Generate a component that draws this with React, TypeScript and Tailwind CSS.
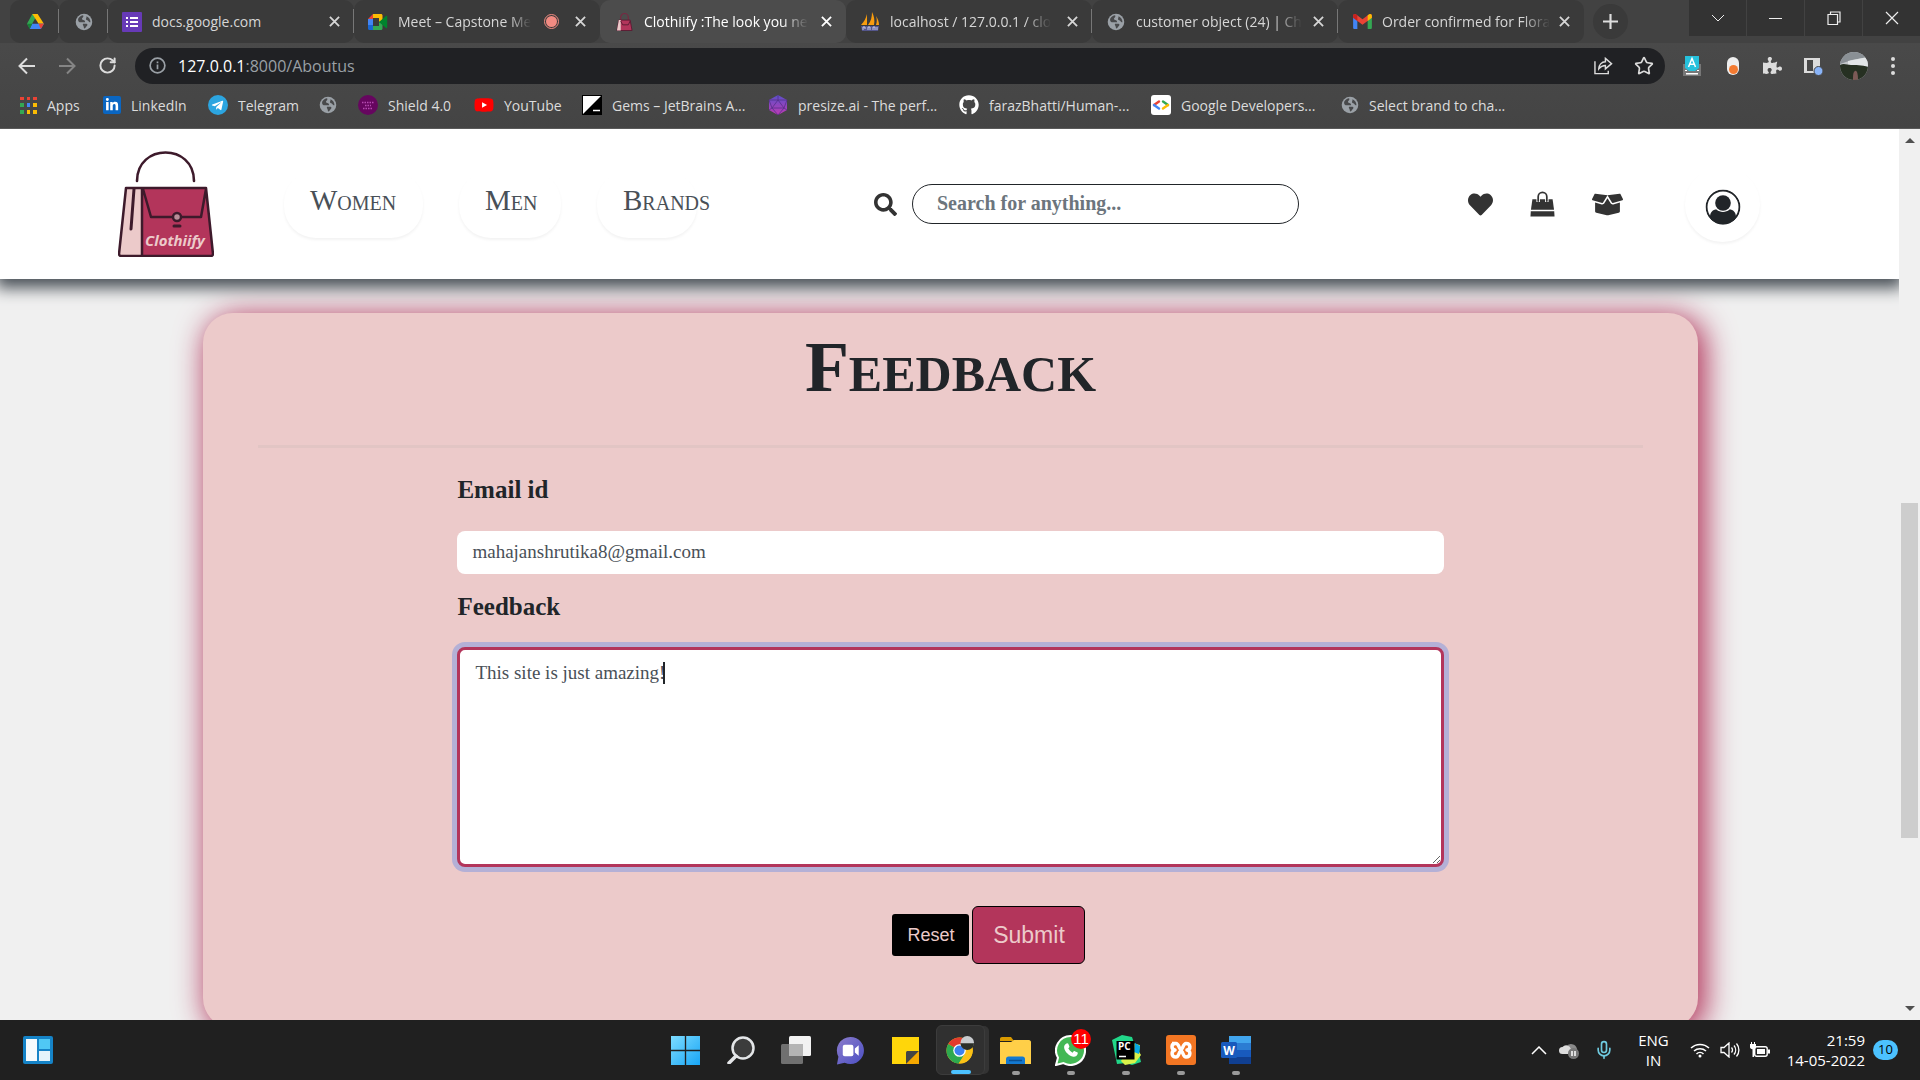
import React from "react";
import { FaHeart, FaBoxOpen, FaGithub, FaLinkedinIn, FaTelegramPlane, FaPuzzlePiece, FaYoutube, FaSearch } from "react-icons/fa";
import { LuMic, LuStar, LuRotateCw } from "react-icons/lu";

const ui = "font-['Open_Sans',sans-serif]";
const serif = "font-['Liberation_Serif',serif]";

/* ---------- browser icons ---------- */

const Globe = () => (
  <svg viewBox="0 0 20 20" className="size-[18px] shrink-0">
    <circle cx="10" cy="10" r="9.2" fill="#9aa0a6" />
    <path d="M3.5 6.5C5 4 7 2.6 9 2.6c.6 1.3.2 2.2-.8 2.9-1 .6-.3 1.9.9 2.2 1.6.4 2.2 1.2 2.1 2.5H5.2c-1.4 0-2-1.8-1.7-3.7zM12.8 3.6c2.6 1.2 4.4 3.6 4.4 6.6-1 .2-1.7-.4-2.4-1.4-.6-.9-1.9-.5-2.5-1.5-.5-1 .6-1.6.5-3.7zM9 12h3.6c1.4 0 1.6 1.6.6 2.5-1 .8-1.2 2.1-2.7 2.8-.9-.4-.5-1.6-1-2.6-.4-.9-1.3-1.7-.5-2.7z" fill="#48494b" />
  </svg>
);

const Drive = () => (
  <svg viewBox="0 0 20 18" className="h-4 w-[18px] shrink-0">
    <path d="M7 0h6l-3.2 5.6L4 16 1 11z" fill="#34a853" />
    <path d="M7 0h6l7 11h-6z" fill="#fbbc04" />
    <path d="M6.6 11H20l-3.4 6H4z" fill="#4285f4" />
    <path d="M1 11h6L4 17z" fill="#188038" />
    <path d="M14 11h6l-3.4 6z" fill="#ea4335" />
  </svg>
);

const Forms = () => (
  <svg viewBox="0 0 20 20" className="size-5 shrink-0">
    <rect width="20" height="20" rx="1" fill="#673ab7" />
    <path d="M4 5h2v2H4zm4 0h8v2H8zM4 9h2v2H4zm4 0h8v2H8zm-4 4h2v2H4zm4 0h8v2H8z" fill="#fff" />
  </svg>
);

const Meet = () => (
  <svg viewBox="0 0 20 16" className="h-4 w-5 shrink-0">
    <path d="M5 0h8c.8 0 1.500.6 1.500 1.500V6L11 8V4H5z" fill="#fbbc04" />
    <path d="M5 0v5H0z" fill="#ea4335" />
    <path d="M0 5h5v6H0z" fill="#4285f4" />
    <path d="M0 11h5v5H1.500C.6 16 0 15.400 0 14.500z" fill="#1967d2" />
    <path d="M5 12h6V8l3.500 2v4.500c0 .9-.7 1.500-1.500 1.500H5z" fill="#34a853" />
    <path d="M11 8l7-6c.5-.4 1.200 0 1.200.6v10.800c0 .6-.7 1-1.200.6z" fill="#00832d" />
  </svg>
);

const Bag = () => (
  <svg viewBox="0 0 18 20" className="h-5 w-[17px] shrink-0">
    <path d="M5 8V5a4 4 0 0 1 8 0v3" fill="none" stroke="#7a2742" strokeWidth="1.200" />
    <path d="M3 8h12l2 11H1z" fill="#b3355b" stroke="#5b1c33" />
    <path d="M3 8h2v11H1z" fill="#eccaca" />
    <path d="M5 9l2 4h6l2-4" fill="none" stroke="#5b1c33" />
  </svg>
);

const PhpMyAdmin = () => (
  <svg viewBox="0 0 20 20" className="size-5 shrink-0">
    <path d="M7 2v11H1C4 10 6 6 7 2zM12 0c2 4 3 8 2 13H8c3-4 4-8 4-13zM16 4c2 3 3 6 3 9h-3c1-3 1-6 0-9z" fill="#f89c0e" />
    <path d="M1 14h18l-1 5H2z" fill="#54568c" />
    <path d="M3 18v-3h2v2M8 18v-3h2v3M13 18v-3h2v3M17 15v3" stroke="#c9cbe8" fill="none" />
  </svg>
);

const Gmail = () => (
  <svg viewBox="0 0 20 16" className="h-[15px] w-[19px] shrink-0">
    <path d="M0 3h4.500v13H1.400C.6 16 0 15.400 0 14.600z" fill="#4285f4" />
    <path d="M15.500 3H20v11.600c0 .8-.6 1.400-1.400 1.400h-3.100z" fill="#34a853" />
    <path d="M0 2c0-2 2-2.500 3.200-1.600L10 5.500 16.800.4C18 -.5 20 0 20 2v2l-10 7.500L0 4z" fill="#ea4335" />
    <path d="M15.500 1.400 16.800.4C18-.5 20 0 20 2v2l-4.500 3.400z" fill="#fbbc04" />
    <path d="M0 2C0 0 2-.5 3.200.4l1.300 1v6L0 4z" fill="#c5221f" />
  </svg>
);

const AppsGrid = () => {
  const colors = ["#ea4335", "#ea4335", "#ea4335", "#34a853", "#4285f4", "#fbbc04", "#34a853", "#fbbc04", "#fbbc04"];
  return (
    <span className="grid size-[17px] shrink-0 grid-cols-3 gap-[3px]">
      {colors.map((c, i) => (
        <span key={i} style={{ backgroundColor: c }} />
      ))}
    </span>
  );
};

const Close = () => (
  <svg viewBox="0 0 12 12" className="size-[11px]" stroke="currentColor" strokeWidth="2">
    <path d="M1 1l10 10M11 1L1 11" />
  </svg>
);

/* ---------- browser chrome ---------- */

function Tab({ icon, title, active, recording, divider, fade }: { icon: React.ReactNode; title: string; active?: boolean; recording?: boolean; divider?: boolean; fade?: boolean }) {
  return (
    <div className={`relative flex h-[43px] w-[246px] min-w-0 items-center rounded-[10px] px-[14px] text-[14px] ${active ? "bg-[#4c4c4c] text-white" : "bg-[#3a3a3a] text-[#d6d6d6]"}`}>
      <span className="mr-[10px] flex w-5 shrink-0 justify-center">{icon}</span>
      <span className="min-w-0 flex-1 whitespace-nowrap">
        <span className={fade ? "[mask-image:linear-gradient(to_right,black_84%,transparent)]" : ""}>{title}</span>
      </span>
      {recording && <span className="mr-4 size-[15px] shrink-0 rounded-full border border-[#f28b82] p-px"><span className="block size-full rounded-full bg-[#f28b82]" /></span>}
      <button aria-label={`Close ${title}`} className="shrink-0"><Close /></button>
      {divider && <span className="absolute top-[9px] right-0 h-6 w-px bg-[#777]" />}
    </div>
  );
}

function PinnedTab({ icon, label }: { icon: React.ReactNode; label: string }) {
  return (
    <button aria-label={label} className="relative flex h-[43px] w-[49px] shrink-0 items-center justify-center rounded-[10px] bg-[#3a3a3a]">
      {icon}
      <span className="absolute top-[9px] right-0 h-6 w-px bg-[#777]" />
    </button>
  );
}

function TabStrip() {
  return (
    <div className="flex h-[43px] items-start bg-[#424242]">
      <div className="flex min-w-0 pl-[10px]">
        <PinnedTab label="Google Drive" icon={<Drive />} />
        <PinnedTab label="Pinned page" icon={<Globe />} />
        <Tab icon={<Forms />} title="docs.google.com" divider />
        <Tab icon={<Meet />} title="Meet – Capstone Me" recording fade />
        <Tab icon={<Bag />} title="Clothiify :The look you ne" active fade />
        <Tab icon={<PhpMyAdmin />} title="localhost / 127.0.0.1 / clo" divider fade />
        <Tab icon={<Globe />} title="customer object (24) | Ch" divider fade />
        <Tab icon={<Gmail />} title="Order confirmed for Flora" fade />
      </div>
      <button aria-label="New tab" className="mt-1 ml-[9px] flex size-[35px] shrink-0 items-center justify-center rounded-full bg-[#3a3a3a] text-[#dedede]">
        <svg viewBox="0 0 14 14" className="size-[15px]" stroke="currentColor" strokeWidth="2"><path d="M7 0v14M0 7h14" /></svg>
      </button>
      <div className="ml-auto flex h-9 shrink-0 gap-px text-[#eee]">
        <button aria-label="Search tabs" className="flex w-[57px] items-center justify-center bg-[#333]"><svg viewBox="0 0 14 8" className="h-2 w-3.5" fill="none" stroke="currentColor"><path d="M1 1l6 6 6-6" /></svg></button>
        <button aria-label="Minimize" className="flex w-[57px] items-center justify-center bg-[#333]"><span className="h-px w-[13px] bg-current" /></button>
        <button aria-label="Restore" className="flex w-[57px] items-center justify-center bg-[#333]"><svg viewBox="0 0 14 14" className="size-[14px]" fill="none" stroke="currentColor" strokeWidth="1.200"><path d="M1 3.500h9.500v10H1zM3.500 3.500V1H13v10h-2.500" /></svg></button>
        <button aria-label="Close window" className="flex w-[57px] items-center justify-center bg-[#333]"><svg viewBox="0 0 14 14" className="size-[14px]" stroke="currentColor" strokeWidth="1.200"><path d="M1 1l12 12M13 1L1 13" /></svg></button>
      </div>
    </div>
  );
}

function Toolbar() {
  return (
    <div className="flex h-[45px] items-center pr-[25px] pl-[18px] text-[#dcdcdc]">
      <button aria-label="Back"><svg viewBox="0 0 18 18" className="size-[18px]" fill="none" stroke="currentColor" strokeWidth="2"><path d="M17 9H2M9 1.500L1.500 9 9 16.500" /></svg></button>
      <button aria-label="Forward" className="ml-[22px] text-[#858585]"><svg viewBox="0 0 18 18" className="size-[18px]" fill="none" stroke="currentColor" strokeWidth="2"><path d="M1 9h15M9 1.500L16.500 9 9 16.500" /></svg></button>
      <button aria-label="Reload" className="ml-[22px]"><LuRotateCw className="size-[19px]" strokeWidth={2.500} /></button>
      <div className="ml-[18px] flex h-9 flex-1 items-center rounded-full bg-[#202124] pr-[11px] pl-[14px]">
        <svg viewBox="0 0 18 18" className="size-[17px]" fill="none" stroke="#9aa0a6" strokeWidth="1.800"><circle cx="9" cy="9" r="7.800" /><path d="M9 8v5M9 4.800v1.800" /></svg>
        <div className="ml-3 flex-1 text-[16px] text-[#9aa0a6]"><span className="text-white">127.0.0.1</span>:8000/Aboutus</div>
        <button aria-label="Share" className="mr-[21px]"><svg viewBox="0 0 20 18" className="h-[18px] w-[19px]" fill="none" stroke="currentColor" strokeWidth="1.500"><path d="M1 4v13h14v-3M12 1l6.500 5.500L12 12V8.500C9 8.500 7 9.500 5 12c0-4 3-7.500 7-7.500z" /></svg></button>
        <button aria-label="Bookmark this tab"><LuStar className="size-5" /></button>
      </div>
      <button aria-label="Keyboard extension" className="ml-[18px]">
        <svg viewBox="0 0 18 20" className="h-5 w-[18px]"><path d="M0 8h18v12H0z" fill="#777" /><path d="M3 17h12v1.500H3zM2 14h2v1H2zm12 0h2v1h-2z" fill="#fff" /><path d="M2 0h14v12l-4 3H6l-4-3z" fill="#26c1dc" /><path d="M5.500 11L9 2.500 12.500 11M6.800 8.300h4.400" stroke="#fff" fill="none" strokeWidth="1.500" /></svg>
      </button>
      <button aria-label="Recorder extension" className="ml-[26px] flex h-[18px] w-3 items-end justify-center rounded-full bg-[#eee] p-px"><span className="size-[9px] rounded-full bg-[#f37a31]" /></button>
      <button aria-label="Extensions" className="ml-6"><FaPuzzlePiece className="size-[19px]" /></button>
      <button aria-label="Side panel" className="ml-[21px]">
        <svg viewBox="0 0 20 20" className="size-5"><path d="M1 2h16v15H1zm3 2v11h6V4z" fill="#dcdcdc" fillRule="evenodd" /><circle cx="15.500" cy="15" r="4.500" fill="#8ab4f8" stroke="#464646" /></svg>
      </button>
      <button aria-label="Profile" className="ml-[17px]">
        <svg viewBox="0 0 28 28" className="size-7"><clipPath id="avatar"><circle cx="14" cy="14" r="14" /></clipPath><g clipPath="url(#avatar)"><path d="M0 0h28v28H0z" fill="#c3c7ca" /><path d="M0 0h28v5L12 8 0 12z" fill="#8a9095" /><path d="M8 9l20-4v9H8z" fill="#e2e5e7" /><path d="M0 13c4-2 7 0 11 0s11 0 17 2v13H0z" fill="#263022" /><path d="M13 28c0-5 0-8 2-9s3 3 3 9z" fill="#7c5a56" /></g></svg>
      </button>
      <button aria-label="Menu" className="ml-[23px] flex flex-col gap-[3px]">
        <span className="size-1 rounded-full bg-current" /><span className="size-1 rounded-full bg-current" /><span className="size-1 rounded-full bg-current" />
      </button>
    </div>
  );
}

function Bookmark({ icon, label, width }: { icon: React.ReactNode; label: string; width: string }) {
  return (
    <a href="#bookmark" aria-label={label || "Bookmark"} className="flex shrink-0 items-center gap-[10px] whitespace-nowrap">
      {icon}
      {label && <span className={width}>{label}</span>}
    </a>
  );
}

function BookmarksBar() {
  return (
    <nav aria-label="Bookmarks" className="flex h-[41px] items-center gap-[21px] border-b border-[#5a5a5a] pb-1.5 pl-5 text-[14px] text-[#dcdcdc]">
      <Bookmark icon={<AppsGrid />} label="Apps" width="w-[35px]" />
      <Bookmark icon={<span className="flex size-[18px] items-center justify-center rounded-[2px] bg-[#0a66c2] text-white"><FaLinkedinIn className="size-[14px]" /></span>} label="LinkedIn" width="w-[56px]" />
      <Bookmark icon={<span className="flex size-5 items-center justify-center rounded-full bg-[#2ca5e0] text-white"><FaTelegramPlane className="mr-0.5 size-[13px]" /></span>} label="Telegram" width="w-[60px]" />
      <Bookmark icon={<Globe />} label="" width="" />
      <Bookmark icon={<svg viewBox="0 0 20 20" className="size-5"><circle cx="10" cy="10" r="10" fill="#66065f" /><path d="M4 7.500h12M7 10.500h6M5 13.500h10" stroke="#b44ab0" strokeWidth="1.500" strokeDasharray="1.500 1" /></svg>} label="Shield 4.0" width="w-[65px]" />
      <Bookmark icon={<FaYoutube className="size-5 text-[#f00] [background:linear-gradient(#fff,#fff)_center/8px_8px_no-repeat]" />} label="YouTube" width="w-[57px]" />
      <Bookmark icon={<svg viewBox="0 0 20 20" className="size-5"><path d="M0 0h20v20H0z" /><path d="M1 1h18L1 19z" fill="#fff" /><path d="M11 15.500h7" stroke="#fff" strokeWidth="1.500" /></svg>} label="Gems – JetBrains A..." width="w-[135px]" />
      <Bookmark icon={<svg viewBox="0 0 20 20" className="size-5"><defs><linearGradient id="gem" x2="0" y2="1"><stop stopColor="#5a50c8" /><stop offset="1" stopColor="#c03bb4" /></linearGradient></defs><path d="M10 0l9 5v10l-9 5-9-5V5z" fill="url(#gem)" /><path d="M10 0v5L4 13h12L10 5M1 5l3 8-3 2M19 5l-3 8 3 2M4 13l6 7 6-7M1 5h9l9 0" fill="none" stroke="#54308c" strokeWidth=".8" /></svg>} label="presize.ai - The perf..." width="w-[140px]" />
      <Bookmark icon={<FaGithub className="size-5 text-white" />} label="farazBhatti/Human-..." width="w-[141px]" />
      <Bookmark icon={<svg viewBox="0 0 20 20" className="size-5"><rect width="20" height="20" rx="3" fill="#fff" /><g fill="none" strokeWidth="2.400" strokeLinecap="round"><path d="M8 6.500L3 10" stroke="#ea4335" /><path d="M3 10l5 3.500" stroke="#4285f4" /><path d="M12 6.500l5 3.500" stroke="#34a853" /><path d="M17 10l-5 3.500" stroke="#fbbc04" /></g></svg>} label="Google Developers..." width="w-[139px]" />
      <Bookmark icon={<Globe />} label="Select brand to cha..." width="w-[140px]" />
    </nav>
  );
}

/* ---------- site ---------- */

const Logo = () => (
  <svg viewBox="0 0 96 106" className="h-[106px] w-24" role="img" aria-label="Clothiify">
    <path d="M19 30C19 -8 76 -8 76 30" fill="none" stroke="#3d1a2b" strokeWidth="2.600" strokeLinecap="round" />
    <path d="M8 37h80l7 66c0 1-1 2-2 2H3c-1 0-2-1-2-2z" fill="#b3355b" />
    <path d="M8 37h16v68H3c-1 0-2-1-2-2z" fill="#eccaca" />
    <path d="M8 37h80l7 66c0 1-1 2-2 2H3c-1 0-2-1-2-2zM24 37v68M25 38l8 28h50l5-28" fill="none" stroke="#3d1a2b" strokeWidth="2.500" strokeLinejoin="round" />
    <path d="M16 38l-3 40M56 75h6" stroke="#3d1a2b" strokeWidth="3" strokeLinecap="round" />
    <circle cx="59" cy="66" r="4" fill="#b98d98" stroke="#3d1a2b" strokeWidth="2.500" />
    <text x="27" y="95" fontFamily="Open Sans, sans-serif" fontSize="15" fontWeight="700" fontStyle="italic" fill="#eccaca">Clothiify</text>
  </svg>
);

const ShoppingBag = () => (
  <svg viewBox="0 0 26 26" className="h-[26px] w-[25px]">
    <path d="M2.500 8h21l1.500 11H1z" fill="#333" />
    <path d="M.8 20.500h24.400L25.500 26H.5z" fill="#333" />
    <path d="M8.500 11V5.500a4.500 4.500 0 0 1 9 0V11" fill="none" stroke="#fff" strokeWidth="3.600" />
    <path d="M8.500 10V5.500a4.500 4.500 0 0 1 9 0V10" fill="none" stroke="#333" strokeWidth="1.800" strokeLinecap="round" />
  </svg>
);

const Person = () => (
  <svg viewBox="0 0 36 36" className="size-[36px]">
    <clipPath id="person"><circle cx="18" cy="18" r="17.500" /></clipPath>
    <g clipPath="url(#person)" fill="#212529">
      <circle cx="18" cy="14" r="7.800" />
      <path d="M5 28c0-5 3-7.500 6.500-7.500 2 1.800 4 2.400 6.500 2.400s4.500-.6 6.500-2.400C28 20.500 31 23 31 28l-3 8H8z" />
      <circle cx="18" cy="18" r="16.500" fill="none" stroke="#212529" strokeWidth="2" />
    </g>
  </svg>
);

const pill = "flex h-[67px] items-center rounded-[32px] pl-[26px] pb-1.5 shadow-[0_2px_3px_rgba(0,0,0,0.05)]";

function SiteHeader() {
  return (
    <header className={`relative z-10 flex h-[150px] shrink-0 items-center justify-between bg-white pr-[139px] pl-[118px] shadow-[0_5px_15px_4px_#495057] ${serif}`}>
      <div className="flex items-center pr-2">
        <a href="#home"><Logo /></a>
        <nav aria-label="Departments" className="ml-[70px] flex gap-9 text-[29px] text-[#495057] [font-variant:small-caps]">
          <a href="#women" className={`${pill} w-[139px]`}>Women</a>
          <a href="#men" className={`${pill} w-[102px]`}>Men</a>
          <a href="#brands" className={`${pill} w-[100px]`}>Brands</a>
        </nav>
      </div>
      <form role="search" className="flex items-center gap-[15px]">
        <button type="button" aria-label="Search"><FaSearch className="size-[23px] text-[#333]" /></button>
        <input type="search" aria-label="Search for anything" placeholder="Search for anything..." className="h-10 w-[387px] rounded-[20px] border border-[#212529] px-6 pb-0.5 text-[20px] font-bold placeholder:text-[#6c757d]" />
      </form>
      <div className="flex items-center">
        <a href="#wishlist" aria-label="Wishlist"><FaHeart className="size-[25px] text-[#333]" /></a>
        <a href="#cart" aria-label="Cart" className="ml-[37px]"><ShoppingBag /></a>
        <a href="#orders" aria-label="Orders" className="ml-[37px]"><FaBoxOpen className="h-[25px] w-[31px] text-[#333]" /></a>
        <a href="#account" aria-label="Account" className="ml-[62px] flex size-[75px] items-center justify-center rounded-full pt-1.5 shadow-[0_2px_3px_rgba(0,0,0,0.05)]"><Person /></a>
      </div>
    </header>
  );
}

function FeedbackCard() {
  return (
    <section className={`mt-[34px] mr-[201px] ml-[203px] rounded-[30px] bg-[#eccaca] px-[55px] pt-3 pb-16 text-[#212529] shadow-[5px_5px_30px_3px_#b3355b] ${serif}`}>
      <h1 className="text-center text-[72px] leading-[84px] font-bold [font-variant:small-caps]">Feedback</h1>
      <hr className="mt-9 h-[3px] border-0 bg-[#e2c5c4]" />
      <form className="mx-auto flex w-[71.2%] flex-col">
        <label htmlFor="email" className="mt-6 text-[25px] leading-[36px] font-bold">Email id</label>
        <input id="email" type="email" defaultValue="mahajanshrutika8@gmail.com" className="mt-[23px] h-[43px] rounded-lg bg-white px-[15px] pb-0.5 text-[19px] text-[#495057]" />
        <label htmlFor="message" className="mt-[15px] text-[25px] leading-[36px] font-bold">Feedback</label>
        <div className="relative mt-[22px] flex">
          <textarea id="message" defaultValue="This site is just amazing!" className="h-[220px] w-full resize rounded-lg border-[3px] border-[#b3355b] bg-white px-[15px] py-2 text-[19px] leading-[29px] text-[#495057] ring-[5px] ring-[#b4b0d6]" />
          <span className="absolute top-[15px] left-[206px] h-[22px] w-0.5 bg-[#212529]" />
        </div>
        <div className="mt-[39px] flex items-center justify-center gap-[3px] pl-[77px] font-['Liberation_Sans',sans-serif] text-[#eccaca]">
          <button type="reset" className="h-[42px] w-[77px] rounded-[3px] bg-black text-[18px]">Reset</button>
          <button type="button" className="h-[58px] w-[113px] rounded-md border border-black bg-[#b3355b] text-[23px]">Submit</button>
        </div>
      </form>
    </section>
  );
}

/* ---------- taskbar ---------- */

function TaskIcon({ label, children, open, active }: { label: string; children: React.ReactNode; open?: boolean; active?: boolean }) {
  return (
    <button aria-label={label} className={`relative flex h-[50px] w-[49px] items-center justify-center rounded-md ${active ? "border border-[#3c3c3c] bg-[#303030] shadow-[5px_0_0_-1px_#333]" : ""}`}>
      {children}
      {open && <span className={`absolute bottom-0 left-1/2 h-1 -translate-x-1/2 rounded-full ${active ? "w-5 bg-[#4cc2ff]" : "w-2 bg-[#9a9a9a]"}`} />}
    </button>
  );
}

function Taskbar() {
  return (
    <footer className={`relative z-20 flex h-[60px] shrink-0 items-center bg-[#202020] text-white ${ui}`}>
      <div className="flex-1 pl-[23px]">
        <button aria-label="Widgets" className="block">
          <svg viewBox="0 0 30 28" className="h-7 w-[30px]"><rect width="30" height="28" rx="2" fill="#1583c7" /><path d="M3 3h11v22H3z" fill="#f4fafd" /><path d="M16 3h11v10H16z" fill="#50c8f5" /><path d="M16 15h11v10H16z" fill="#e3f3fb" /></svg>
        </button>
      </div>
      <div className="flex gap-[6px]">
        <TaskIcon label="Start"><svg viewBox="0 0 30 30" className="size-[29px]"><defs><linearGradient id="win" x2="1" y2="1"><stop stopColor="#7ddcff" /><stop offset="1" stopColor="#18a5f5" /></linearGradient></defs><path d="M0 0h14.300v14.300H0zM15.700 0H30v14.300H15.700zM0 15.700h14.300V30H0zM15.700 15.700H30V30H15.700z" fill="url(#win)" /></svg></TaskIcon>
        <TaskIcon label="Search"><svg viewBox="0 0 28 28" className="size-7"><circle cx="16" cy="12" r="10.500" fill="#3c3c3c" stroke="#e4e6e8" strokeWidth="2.500" /><path d="M9 20l-7 7" stroke="#e4e6e8" strokeWidth="3.500" strokeLinecap="round" /></svg></TaskIcon>
        <TaskIcon label="Task view"><svg viewBox="0 0 30 28" className="h-7 w-[30px]"><rect x="8" width="22" height="20" rx="1.500" fill="#f2f2f2" /><rect y="8" width="22" height="20" rx="1.500" fill="#707070" /><path d="M8 8h14v12H8z" fill="#b4b4b4" /></svg></TaskIcon>
        <TaskIcon label="Chat"><svg viewBox="0 0 30 30" className="size-[29px]"><defs><linearGradient id="chat" x2="1" y2="1"><stop stopColor="#8b7ccb" /><stop offset="1" stopColor="#4b4fc4" /></linearGradient></defs><path d="M15 1a14 14 0 1 1-6 26.700L1 29.500l1.500-8A14 14 0 0 1 15 1z" fill="url(#chat)" /><rect x="7" y="9" width="11" height="12" rx="2" fill="#fff" /><path d="M19.500 13l4-3.500v11l-4-3.500z" fill="#fff" /></svg></TaskIcon>
        <TaskIcon label="Sticky notes"><svg viewBox="0 0 27 27" className="size-[27px]"><path d="M0 0h27v14L14 27H0z" fill="#ffd60a" /><path d="M14 27V16c0-1.500.5-2 2-2h11z" fill="#444" /><path d="M27 14v13H14z" fill="#f5a800" /></svg></TaskIcon>
        <TaskIcon label="Chrome" open active><svg viewBox="0 0 30 30" className="size-[29px]"><circle cx="14" cy="15" r="13.500" fill="#fbc116" /><path d="M14 15L2.300 8.200A13.500 13.500 0 0 1 25.700 8.200z" fill="#e33b2e" /><path d="M14 15L2.300 8.200A13.500 13.500 0 0 0 13 28.500L20 18z" fill="#2da94f" /><path d="M14 8.500h12a13.500 13.500 0 0 1-12.500 20l6-10.500z" fill="#fbc116" /><circle cx="14" cy="15" r="6.500" fill="#fff" /><circle cx="14" cy="15" r="5.200" fill="#3b82f0" /><circle cx="22" cy="7" r="7" fill="#c9cccf" /><path d="M15 7.500h14a7 7 0 0 1-14 0z" fill="#2b2f28" /></svg></TaskIcon>
        <TaskIcon label="File explorer" open><svg viewBox="0 0 31 27" className="h-[27px] w-[31px]"><path d="M0 2C0 .8.8 0 2 0h9l3 4H0z" fill="#d99a00" /><path d="M0 5h11l3-2h15c1 0 2 1 2 2v22H0z" fill="#ffcf48" /><path d="M6 27v-5c0-1.500 1-2.500 2.500-2.500h14c1.500 0 2.500 1 2.500 2.500v5z" fill="#1479d0" /><path d="M9 23.500h13" stroke="#0b4f91" strokeWidth="1.500" /></svg></TaskIcon>
        <TaskIcon label="WhatsApp, 11 unread" open>
          <svg viewBox="0 0 30 30" className="size-[31px]"><path d="M15 1a14 14 0 1 1-6.800 26.200L1 29l1.900-7A14 14 0 0 1 15 1z" fill="#43b854" stroke="#fff" strokeWidth="2" /></svg>
          <svg viewBox="0 0 24 24" className="absolute size-[19px]"><path d="M7 3c1-.6 1.800-.3 2.200.6l1.300 3c.3.700 0 1.200-1.300 2.700 1 2.300 3 4.300 5.500 5.400 1.500-1.900 2-2.200 2.700-1.900l3 1.400c.9.400 1 .8.600 2.300-.6 2.300-3.200 3.800-5.500 3.300C9.500 18.300 5 13.500 4 8.700 3.500 6.200 5 4 7 3z" fill="#fff" /></svg>
          <span className="absolute top-1 right-1 flex size-5 items-center justify-center rounded-full bg-[#f00] font-['Liberation_Sans',sans-serif] text-[15px]">11</span>
        </TaskIcon>
        <TaskIcon label="PyCharm" open><svg viewBox="0 0 30 30" className="size-[30px]"><path d="M1 5l10-5 10 2 2 6 6 3-1 8 2 8-9 3-6-2-9 1z" fill="#21d789" /><path d="M20 8l9 2-2 5 3 5-6 8-10 2-4-4z" fill="#d9f24a" /><path d="M24 8l5 3-1 8-5-2z" fill="#07a8e5" /><path d="M5.500 6h18v18.500h-18z" /><path d="M8 21.500h7" stroke="#fff" strokeWidth="1.500" /><text x="7" y="15" fontSize="10" fontWeight="700" fontFamily="Open Sans, sans-serif" fill="#fff">PC</text></svg></TaskIcon>
        <TaskIcon label="XAMPP" open><svg viewBox="0 0 30 30" className="size-[30px]"><rect width="30" height="30" rx="3" fill="#f37623" /><path d="M6 8.500h4c3 0 3 6 5 6s2-6 5-6c5 0 5 6 1 6.500 4 .5 4 7-1 7-3 0-3-6-5-6s-2 6-5 6c-5 0-5-6-1-7-4-.5-4-6 0-6.500" fill="none" stroke="#fff" strokeWidth="3.500" strokeLinejoin="round" /></svg></TaskIcon>
        <TaskIcon label="Word" open><svg viewBox="0 0 30 28" className="h-7 w-[30px]"><path d="M8 0h22v7H8z" fill="#41a5ee" /><path d="M8 7h22v7H8z" fill="#2b7cd3" /><path d="M8 14h22v7H8z" fill="#185abd" /><path d="M8 21h22v7H8z" fill="#103f91" /><rect y="6" width="16" height="16" rx="1.500" fill="#185abd" /><text x="8" y="18.500" textAnchor="middle" fontSize="12" fontWeight="700" fontFamily="Open Sans, sans-serif" fill="#fff">W</text></svg></TaskIcon>
      </div>
      <div className="flex flex-1 items-center justify-end pr-[22px]">
        <button aria-label="Hidden icons"><svg viewBox="0 0 16 9" className="h-[9px] w-4" fill="none" stroke="#fff" strokeWidth="1.500"><path d="M1 8l7-7 7 7" /></svg></button>
        <svg viewBox="0 0 20 18" className="ml-3 h-[18px] w-5"><path d="M7 6a6 6 0 0 1 11 2v4H9z" fill="#8a8a8a" /><path d="M3.500 13a3.500 3.500 0 0 1 0-7A5 5 0 0 1 12 8v5z" fill="#ddd" /><circle cx="14.500" cy="12.500" r="5.500" fill="#777" /><path d="M13 10v5M16 10v5" stroke="#fff" strokeWidth="1.500" /></svg>
        <LuMic className="ml-[15px] size-5 text-[#6fcbe0]" />
        <div className="ml-6 text-center text-[15px] leading-5">ENG<br />IN</div>
        <svg viewBox="0 0 20 16" className="ml-[21px] h-4 w-5" fill="none" stroke="#fff" strokeWidth="1.500"><path d="M1 6a13 13 0 0 1 18 0M4 9a9 9 0 0 1 12 0M6.500 12a5 5 0 0 1 7 0" /><circle cx="10" cy="14" r="1.500" fill="#fff" stroke="none" /></svg>
        <svg viewBox="0 0 20 16" className="ml-[10px] h-4 w-5" fill="none" stroke="#fff" strokeWidth="1.300"><path d="M1 5.500h3L9 1v14l-5-4.500H1zM11.500 5.500a4 4 0 0 1 0 5M14 3.500a7 7 0 0 1 0 9M16.500 1.500a10 10 0 0 1 0 13" /></svg>
        <svg viewBox="0 0 20 16" className="ml-[10px] h-4 w-5"><rect x="4.700" y="4.700" width="12.500" height="9.600" rx="2" fill="none" stroke="#fff" strokeWidth="1.400" /><path d="M7 7h8v5H7zM18 7.500h2v4h-2z" fill="#fff" /><path d="M0 2h6v3c0 1.500-1 2-2 2.200V15H2.500V7.200C1 7 0 6.500 0 5zM1 0h1v2H1zM4 0h1v2H4z" fill="#fff" /></svg>
        <div className="ml-[17px] text-right text-[15px] leading-5">21:59<br />14-05-2022</div>
        <span className="ml-2 flex h-5 w-[25px] items-center justify-center rounded-full bg-[#4cc2ff] text-[13px] text-black">10</span>
      </div>
    </footer>
  );
}

export default function App() {
  return (
    <div className="flex h-screen flex-col overflow-hidden bg-[#f0f0f0]">
      <div className={`shrink-0 bg-linear-to-b from-[#4c4c4c] to-[#444] ${ui}`}>
        <TabStrip />
        <Toolbar />
        <BookmarksBar />
      </div>
      <div className="flex min-h-0 flex-1">
        <main className="min-w-0 flex-1 overflow-hidden">
          <SiteHeader />
          <FeedbackCard />
        </main>
        <div className="flex w-[21px] shrink-0 flex-col items-center justify-between bg-[#f0f0f0] py-2">
          <svg viewBox="0 0 10 6" className="h-1.5 w-2.5"><path d="M0 6l5-5 5 5z" fill="#505050" /></svg>
          <div className="mt-[192px] h-[38.2%] w-[17px] bg-[#cdcdcd]" />
          <svg viewBox="0 0 10 6" className="h-1.5 w-2.5"><path d="M0 0l5 5 5-5z" fill="#505050" /></svg>
        </div>
      </div>
      <Taskbar />
    </div>
  );
}
